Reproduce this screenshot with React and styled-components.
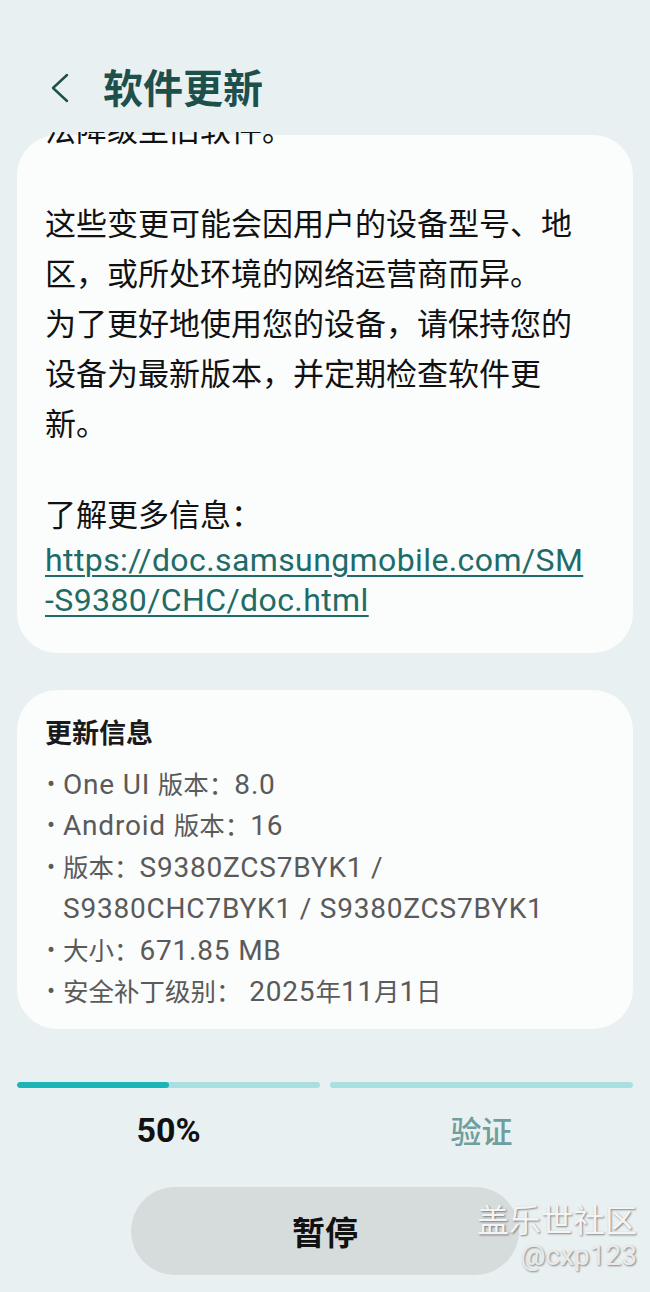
import React from "react";
import styled, { createGlobalStyle } from "styled-components";

const GlobalStyle = createGlobalStyle`
  html, body {
    margin: 0;
    padding: 0;
    background: #e9f0f2;
  }
  body {
    font-family: Roboto, "Noto Sans CJK SC", sans-serif;
  }
`;

// Page frame
const Page = styled.div`
  position: relative;
  width: 650px;
  height: 1292px;
  display: flex;
  flex-direction: column;
  background: #e9f0f2;
  overflow: hidden;
`;

const Header = styled.header`
  height: 132px;
  box-sizing: border-box;
  padding: 62px 0 0 48px;
  display: flex;
  align-items: flex-start;
  gap: 31px;
`;

const BackButton = styled.button`
  border: 0;
  background: none;
  padding: 0;
  margin-top: 8px;
  width: 24px;
  height: 36px;
  display: flex;
  align-items: center;
  justify-content: center;
  cursor: pointer;
`;

const Title = styled.h1`
  margin: 0;
  font-size: 40px;
  line-height: 48px;
  font-weight: 700;
  color: #1d4f4b;
  font-family: "Noto Sans CJK SC", sans-serif;
`;

const Viewport = styled.main`
  flex: 1;
  overflow: hidden;
  padding: 0 17px;
`;

const Card = styled.section`
  display: flow-root;
  background: #fbfcfc;
  border-radius: 40px;
  margin-top: ${(p) => p.$top || 0}px;
  padding: ${(p) => p.$padding};
`;

const Text = styled.div`
  font-family: "Noto Sans CJK SC", sans-serif;
  font-size: 31px;
  line-height: ${(p) => p.$lh || 50}px;
  color: #111;
  margin-top: ${(p) => p.$mt || 0}px;
  white-space: nowrap;
`;

const Link = styled.a`
  display: block;
  margin-top: 5px;
  font-family: Roboto, sans-serif;
  font-size: 32px;
  line-height: 40px;
  color: #1e6b67;
  text-decoration: underline;
  text-decoration-thickness: 2px;
  text-underline-offset: 4px;
  white-space: nowrap;
  letter-spacing: 0.4px;
`;

const InfoTitle = styled.h2`
  margin: 0;
  font-family: "Noto Sans CJK SC", sans-serif;
  font-size: 27px;
  line-height: 44px;
  font-weight: 700;
  color: #1a1a1a;
`;

const InfoList = styled.ul`
  list-style: none;
  margin: 10px 0 0;
  padding: 0;
`;

const InfoItem = styled.li`
  display: flex;
  font-size: 28px;
  line-height: 41.4px;
  letter-spacing: 0.8px;
  color: #5a5a5a;
  white-space: nowrap;
`;

const Cjk = styled.span`
  font-family: "Noto Sans CJK SC", sans-serif;
  font-size: 25.5px;
  line-height: 1;
  letter-spacing: 0;
`;

const Bullet = styled.span`
  width: 18px;
  flex: none;
  font-size: 24px;
  padding-left: 2px;
  box-sizing: border-box;
`;

const Footer = styled.footer`
  height: 242px;
  box-sizing: border-box;
  padding: 32px 17px 0;
  display: flex;
  flex-direction: column;
  align-items: center;
`;

const Steps = styled.div`
  width: 100%;
  display: grid;
  grid-template-columns: 1fr 1fr;
  gap: 10px;
`;

const Step = styled.div`
  display: flex;
  flex-direction: column;
  align-items: center;
`;

const Track = styled.div`
  width: 100%;
  height: 6px;
  border-radius: 3px;
  background: #a9dfe1;
  overflow: hidden;
`;

const Fill = styled.div`
  height: 100%;
  background: #1bb5b8;
  border-radius: 3px;
`;

const StepLabel = styled.div`
  margin-top: 22px;
  font-size: ${(p) => (p.$active ? 34 : 31)}px;
  line-height: 40px;
  font-weight: ${(p) => (p.$active ? 700 : 500)};
  color: ${(p) => (p.$active ? "#111" : "#6e9f9c")};
  font-family: ${(p) =>
    p.$active ? "Roboto, sans-serif" : '"Noto Sans CJK SC", sans-serif'};
`;

const PauseButton = styled.button`
  margin-top: 37px;
  width: 388px;
  height: 88px;
  border: 0;
  border-radius: 44px;
  background: #d6dbdc;
  font-family: "Noto Sans CJK SC", sans-serif;
  font-size: 33px;
  font-weight: 700;
  color: #111;
  cursor: pointer;
`;

// watermark sits over the page
const Watermark = styled.div`
  position: absolute;
  right: 13px;
  bottom: 18px;
  display: flex;
  flex-direction: column;
  align-items: flex-end;
  color: #f4f4f4;
  text-shadow: 1px 1px 2px rgba(0, 0, 0, 0.45);
  pointer-events: none;
`;

const WatermarkBrand = styled.div`
  font-family: "Noto Sans CJK SC", sans-serif;
  font-size: 32px;
  line-height: 40px;
`;

const WatermarkUser = styled.div`
  font-family: Roboto, sans-serif;
  font-size: 28px;
  line-height: 36px;
  color: #eaeaea;
`;

const infoItems = [
  ["One UI 版本：8.0"],
  ["Android 版本：16"],
  ["版本：S9380ZCS7BYK1 /", "S9380CHC7BYK1 / S9380ZCS7BYK1"],
  ["大小：671.85 MB"],
  ["安全补丁级别： 2025年11月1日"],
];

const progress = 50;

// CJK runs are set a bit smaller than the latin runs, like the system font
const CJK_RUN = /([\u3000-\u9fff\uff00-\uffef]+)/;
const renderMixed = (str) =>
  str
    .split(CJK_RUN)
    .filter(Boolean)
    .map((part, i) =>
      CJK_RUN.test(part) ? (
        <Cjk key={i}>{part}</Cjk>
      ) : (
        <React.Fragment key={i}>{part}</React.Fragment>
      )
    );

export default function App() {
  return (
    <Page>
      <GlobalStyle />
      <Header>
        <BackButton aria-label="返回">
          <svg width="20" height="30" viewBox="0 0 20 30">
            <polyline
              points="17,2 3,15 17,28"
              fill="none"
              stroke="#1d4f4b"
              strokeWidth="2.4"
              strokeLinecap="round"
              strokeLinejoin="round"
            />
          </svg>
        </BackButton>
        <Title>软件更新</Title>
      </Header>

      <Viewport>
        <Card $top={3} $padding="0 28px 33px">
          <Text $mt={-32}>法降级至旧软件。</Text>
          <Text $mt={44}>这些变更可能会因用户的设备型号、地</Text>
          <Text>区，或所处环境的网络运营商而异。</Text>
          <Text>为了更好地使用您的设备，请保持您的</Text>
          <Text>设备为最新版本，并定期检查软件更</Text>
          <Text>新。</Text>
          <Text $mt={44} $lh={44}>
            了解更多信息：
          </Text>
          <Link href="#">
            https://doc.samsungmobile.com/SM
            <br />
            -S9380/CHC/doc.html
          </Link>
        </Card>

        <Card $top={37} $padding="20px 28px 17px">
          <InfoTitle>更新信息</InfoTitle>
          <InfoList>
            {infoItems.map((lines, i) => (
              <InfoItem key={i}>
                <Bullet>•</Bullet>
                <span>
                  {lines.map((l, j) => (
                    <React.Fragment key={j}>
                      {j > 0 && <br />}
                      {renderMixed(l)}
                    </React.Fragment>
                  ))}
                </span>
              </InfoItem>
            ))}
          </InfoList>
        </Card>
      </Viewport>

      <Footer>
        <Steps>
          <Step>
            <Track>
              <Fill style={{ width: `${progress}%` }} />
            </Track>
            <StepLabel $active>{progress}%</StepLabel>
          </Step>
          <Step>
            <Track />
            <StepLabel>验证</StepLabel>
          </Step>
        </Steps>
        <PauseButton>暂停</PauseButton>
      </Footer>

      <Watermark>
        <WatermarkBrand>盖乐世社区</WatermarkBrand>
        <WatermarkUser>@cxp123</WatermarkUser>
      </Watermark>
    </Page>
  );
}
